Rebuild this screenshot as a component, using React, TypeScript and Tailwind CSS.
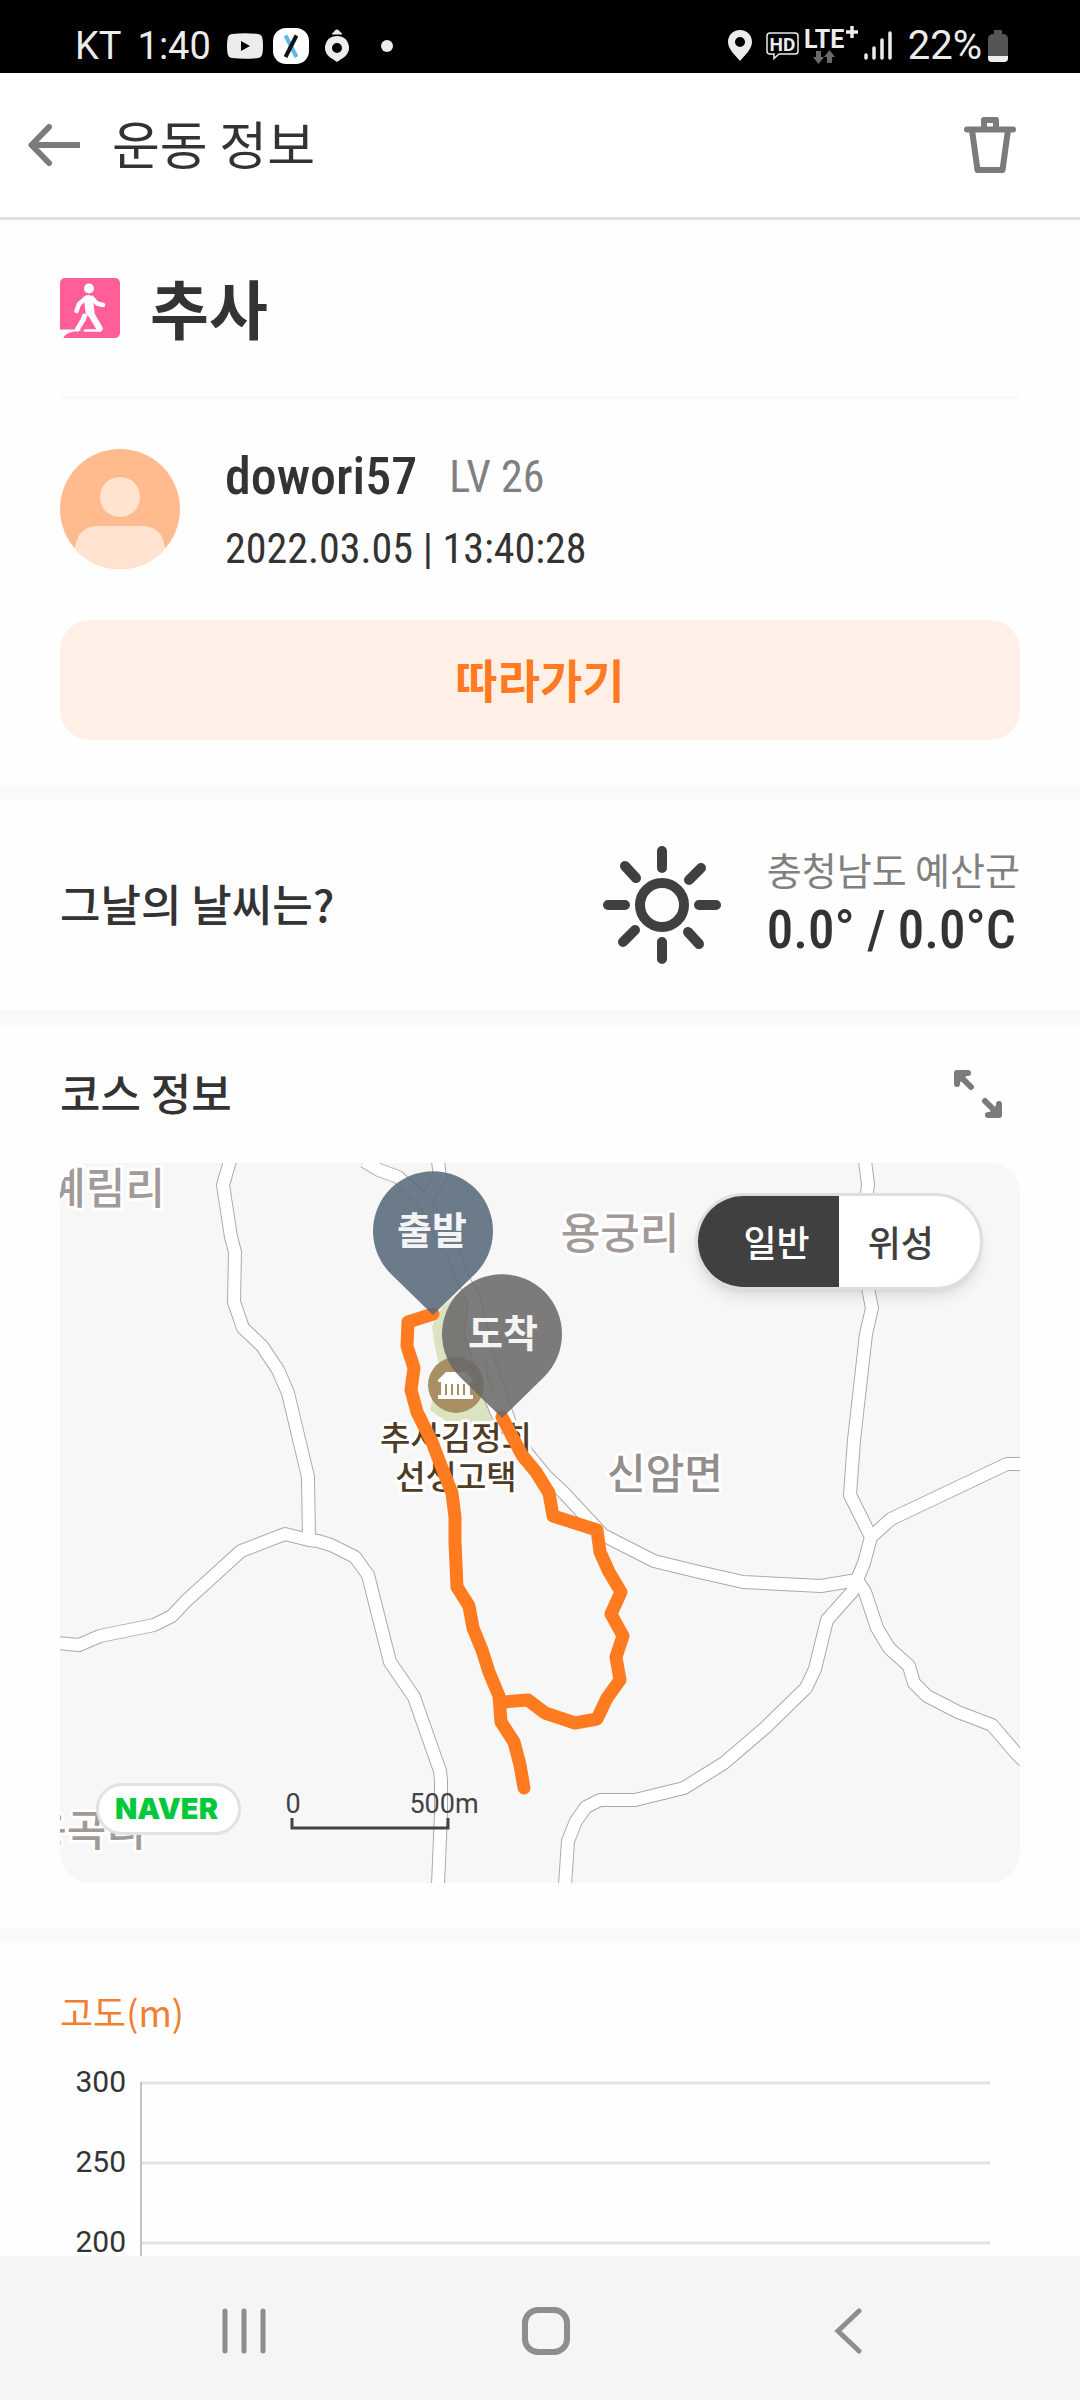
import React, { useState } from 'react';

const ROADS = [
  '170,-2 163,22 171,74 175,89 174,139 183,165 202,183 218,207 228,230 248,314 249,377',
  '-2,480 19,482 40,473 94,462 112,453 126,438 181,388 225,371 249,377 258,378 271,382 295,394 308,412 330,499 354,534 380,608 381,617 381,650 378,722',
  '805,-2 808,21 806,40 808,125 812,145 806,171 794,277 790,332 811,374',
  '962,301 947,301 831,356 811,374 804,400 797,417',
  '797,417 761,423 683,419 639,409 594,398 543,372 503,329 485,312 467,290 450,260 430,204 420,160 413,134 402,114 393,89 380,70 368,44 363,37 338,14 319,7 304,-2',
  '378,-2 380,14 366,38',
  '415,138 411,169 418,190 420,210 437,250 467,298',
  '797,417 792,429 767,457 755,506 746,525 706,564 664,600 624,625 575,637 540,637 526,644 516,658 508,678 505,722',
  '797,417 805,429 817,465 829,485 849,503 854,520 867,533 898,549 932,562 956,590 964,598',
];

const TRACK_OUT =
  '373,151 348,159 347,183 354,205 351,227 357,249 372,279 380,300 392,330 395,354 395,379 397,424 409,443 413,465 422,487 429,509 439,533 441,559 454,579 460,602 464,625';
const TRACK_BACK =
  '443,539 468,537 485,550 515,560 537,556 547,535 560,517 556,494 563,473 551,451 561,429 549,409 540,389 537,367 493,353 489,330 476,309 462,292 442,254';

const ALTITUDES = [300, 250, 200];

const StatusBar: React.FC = () => (
  <div className="flex h-[73px] shrink-0 items-center bg-black pt-[18px] pr-[72px] pl-[75px] font-[Roboto,sans-serif] text-[38px] leading-10 text-[#ececec]">
    <span>KT</span>
    <span className="ml-4">1:40</span>
    <svg className="ml-4" width="36" height="26" viewBox="0 0 36 26" fill="currentColor">
      <path fillRule="evenodd" d="M5 1Q18-.5 31 1Q35 1.500 35.500 6Q36.500 13 35.500 20Q35 24.500 31 25Q18 26.500 5 25Q1 24.500.5 20Q-.5 13 .5 6Q1 1.500 5 1ZM14 8V18L23 13Z" />
    </svg>
    <svg className="ml-[10px]" width="36" height="36" viewBox="0 0 36 36">
      <rect width="36" height="36" rx="13" fill="#fff" />
      <path d="M12.500 7.500 23.500 29" stroke="#5bb8e8" strokeWidth="4" />
      <path d="M23.500 7.500 12.500 29" stroke="#111" strokeWidth="4" />
    </svg>
    <svg className="ml-4" width="24" height="33" viewBox="0 0 24 33" fill="currentColor">
      <path d="M7 4.500Q9 3 10 1.500Q12-.5 14 1.500Q15 3 17 4.500V5.500H7Z" />
      <path fillRule="evenodd" d="M12 7Q17 7 20.500 10Q24 14 24 19C24 26 18 29 12 33C6 29 0 26 0 19Q0 14 3.500 10Q7 7 12 7ZM12 14A5 5 0 1 0 12 24A5 5 0 1 0 12 14Z" />
    </svg>
    <span className="ml-8 h-3 w-3 rounded-full bg-[#ececec]" />

    <div className="ml-auto flex items-center">
      <svg width="24" height="31" viewBox="0 0 24 31" fill="currentColor">
        <path fillRule="evenodd" d="M12 0C19 0 24 5 24 12C24 19 17 25 12 31C7 25 0 19 0 12C0 5 5 0 12 0ZM12 7A5 5 0 1 0 12 17A5 5 0 1 0 12 7Z" />
      </svg>
      <svg className="ml-[14px]" width="34" height="28" viewBox="0 0 34 28">
        <path d="M4 1H29Q32 1 32 4V19Q32 22 29 22H13L8 26.500V22H4Q1 22 1 19V4Q1 1 4 1Z" fill="none" stroke="currentColor" strokeWidth="1.500" />
        <text x="16.500" y="18.500" textAnchor="middle" fontSize="19" fontWeight="700" fill="currentColor">HD</text>
      </svg>
      <svg className="ml-1" width="56" height="40" viewBox="0 0 56 40">
        <text x="0" y="22" fontSize="25" fontWeight="700" fill="currentColor">LTE</text>
        <path d="M42 6H54M48 0V12" stroke="currentColor" strokeWidth="3.500" />
        <path d="M12 25H17V31H20L14.500 38 9 31H12ZM23 37H28V31H31L25.500 24 20 31H23Z" fill="#6a6a6a" />
      </svg>
      <svg className="ml-1" width="28" height="30" viewBox="0 0 28 30" stroke="currentColor" strokeWidth="3.500" strokeLinecap="round">
        <path d="M2 24V27M10 17V27M18 9V27M26 2V27" />
      </svg>
      <span className="ml-4 text-[40px]">22%</span>
      <svg className="ml-[6px]" width="20" height="32" viewBox="0 0 20 32">
        <path d="M6 0H14V4H16Q20 5 20 9V28Q20 32 16 32H4Q0 32 0 28V9Q0 5 4 4H6Z" fill="#555" />
        <path d="M0 26H20V28Q20 32 16 32H4Q0 32 0 28Z" fill="#eee" />
      </svg>
    </div>
  </div>
);

const Header: React.FC = () => (
  <header className="flex h-[147px] shrink-0 items-center border-b-[3px] border-[#e0e0e0] bg-white pr-16 pl-7">
    <button type="button" aria-label="뒤로">
      <svg width="54" height="44" viewBox="0 0 54 44" fill="none" stroke="#7b7b7b" strokeWidth="6" strokeLinecap="round" strokeLinejoin="round">
        <path d="M21 4 3.500 22 21 40" />
        <path d="M5 22H52" strokeLinecap="butt" />
      </svg>
    </button>
    <h1 className="ml-[30px] pb-1 text-[52px] leading-[72px]">운동 정보</h1>
    <button type="button" aria-label="삭제" className="ml-auto">
      <svg width="52" height="57" viewBox="0 0 52 57" fill="none" stroke="#7b7b7b" strokeWidth="6" strokeLinecap="round" strokeLinejoin="round">
        <path d="M3 12.500H49M20 12V3H32V12M8 13 13.500 53H38.500L44 13" />
      </svg>
    </button>
  </header>
);

const Profile: React.FC = () => (
  <section className="px-[60px] pb-[45px]">
    <div className="flex h-[179px] items-center gap-[30px] border-b-[3px] border-[#f9f9f9]">
      <svg width="60" height="60" viewBox="0 0 60 60">
        <rect width="60" height="60" rx="5" fill="#ff5e98" />
        <path d="M0 51.500H14L24 53Q7 52 3 60H0Z" fill="#fff" />
        <circle cx="29" cy="10.500" r="5" fill="#fff" />
        <g fill="none" stroke="#fff" strokeLinecap="round" strokeLinejoin="round">
          <path d="M28.500 21.500 30 34" strokeWidth="9" />
          <path d="M26 20 19 26 16.500 33M32 20 37 25.500 43 27" strokeWidth="4.500" />
          <path d="M30 34 39.500 50.500" strokeWidth="6.500" />
          <path d="M24.500 38 23 42 17.500 51" strokeWidth="5" />
          <path d="M25 52.500H40" strokeWidth="2.500" />
        </g>
      </svg>
      <h2 className="pb-1 text-[64px] leading-[90px] font-bold">추사</h2>
    </div>

    <div className="mt-[34px] mb-[35px] flex items-center gap-[45px]">
      <svg width="120" height="120" viewBox="0 0 120 120">
        <clipPath id="avatar">
          <circle cx="60" cy="60" r="60" />
        </clipPath>
        <g clipPath="url(#avatar)">
          <rect width="120" height="120" fill="#ffba8e" />
          <circle cx="60" cy="48" r="20" fill="#ffe2cf" />
          <path d="M15 120V100Q17 77 39 77H82Q103 77 105 100V120Z" fill="#ffe2cf" />
        </g>
      </svg>
      <div className="pt-2 font-['Roboto_Condensed',Roboto,sans-serif] text-[42px] leading-[72px]">
        <div className="flex gap-8">
          <span className="text-[52px] font-medium">dowori57</span>
          <span className="text-[44px] text-[#808080]">LV 26</span>
        </div>
        <div>2022.03.05 | 13:40:28</div>
      </div>
    </div>

    <button type="button" className="h-[120px] w-full rounded-[30px] bg-[#fff0e7] pb-1 text-[46px] font-bold text-[#ff7a20]">
      따라가기
    </button>
  </section>
);

const Weather: React.FC = () => (
  <section className="flex h-[225px] items-center border-t-[15px] border-[#f9f9f9] px-[60px]">
    <h3 className="pb-1 text-[44px] leading-[60px] font-medium">그날의 날씨는?</h3>
    <svg className="ml-auto" width="118" height="118" viewBox="0 0 118 118" fill="none" stroke="#404040" strokeWidth="10" strokeLinecap="round">
      <circle cx="59" cy="59" r="22" />
      <path d="M59 5V22M59 96V113M5 59H22M96 59H113M22 20 33 32M98 22 86 34M20 96 32 84M96 98 85 86" />
    </svg>
    <div className="ml-[46px]">
      <div className="text-[38px] leading-[50px] text-[#808080]">충청남도 예산군</div>
      <div className="font-['Roboto_Condensed',Roboto,sans-serif] text-[53px] leading-[72px] font-medium">
        0.0° / 0.0°C
      </div>
    </div>
  </section>
);

const CourseMap: React.FC = () => {
  const [satellite, setSatellite] = useState(false);

  return (
    <div className="relative overflow-hidden rounded-[30px] bg-[#f7f7f7]">
      <svg className="block w-full" viewBox="0 0 960 720" fill="none">
        <path d="M390 137Q397 130 405 132L420 160 428 210 446 262H392L370 247 380 207 375 184 372 164Q376 148 390 137Z" fill="#dbe3c0" />

        <g stroke="#aaa" strokeWidth="14" strokeLinejoin="round">
          {ROADS.map((points) => <polyline key={points} points={points} />)}
        </g>
        <g stroke="#fff" strokeWidth="12" strokeLinejoin="round">
          {ROADS.map((points) => <polyline key={points} points={points} />)}
        </g>
        <path d="M424 192 437 236 426 216Z" fill="#dbe3c0" />

        {/* Historic house */}
        <circle cx="396" cy="222" r="28" fill="#a89064" />
        <path d="M386 209H406L413 217V219H378V217ZM381 219H410V232H381ZM378 232H413V236H378Z" fill="#fff" />
        <path d="M386 221V232M392 221V232M398 221V232M404 221V232" stroke="#a89064" strokeWidth="2" />

        <g stroke="#fff" strokeWidth="6" strokeLinejoin="round" className="[paint-order:stroke]" fontSize="43" fontWeight="500">
          <g fill="#a19a99">
            <text x="105" y="41" textAnchor="end">예림리</text>
            <text x="560" y="86" textAnchor="middle">용궁리</text>
            <text x="86" y="683" textAnchor="end">용곡리</text>
          </g>
          <text x="605" y="326" textAnchor="middle" fontSize="42" fill="#938d8c">신암면</text>
          <g fontSize="33" fill="#4f3c26" textAnchor="middle">
            <text x="396" y="287">추사김정희</text>
            <text x="396" y="326">선생고택</text>
          </g>
        </g>

        <g stroke="#ff7b20" strokeWidth="13" strokeLinejoin="round" strokeLinecap="round">
          <polyline points={TRACK_OUT} />
          <polyline points={TRACK_BACK} />
        </g>

        {/* Start and finish pins */}
        <path d="M373 152 331 111A60 60 0 1 1 415 111Z" fill="#586a7b" fillOpacity="0.88" />
        <path d="M442 255 400 214A60 60 0 1 1 484 214Z" fill="#686868" fillOpacity="0.87" />
        <g fill="#f4f4f4" fontSize="38" fontWeight="700" textAnchor="middle">
          <text x="372" y="81">출발</text>
          <text x="443" y="184">도착</text>
        </g>

        <path d="M232 655V665H388V655" stroke="#404448" strokeWidth="3" />
        <g fill="#404448" fontSize="27" textAnchor="middle" className="font-[Roboto,sans-serif]">
          <text x="233" y="650">0</text>
          <text x="384" y="650">500m</text>
        </g>
      </svg>

      <div className="absolute top-[30px] right-[37px] flex rounded-full border-[3px] border-[#dedede] bg-white text-[36px] leading-[91px] font-medium shadow-lg">
        <button
          type="button"
          aria-pressed={!satellite}
          onClick={() => setSatellite(false)}
          className="rounded-l-full bg-[#404040] pr-[29px] pl-[46px] text-white"
        >
          일반
        </button>
        <button
          type="button"
          aria-pressed={satellite}
          onClick={() => setSatellite(true)}
          className="rounded-r-full pr-[46px] pl-[29px] text-[#404040]"
        >
          위성
        </button>
      </div>

      <a href="#naver" className="absolute bottom-12 left-9 flex h-[52px] items-center rounded-full border-[3px] border-[#e2e2e2] bg-white pr-5 pl-4 font-[Inter,sans-serif] text-[29px] font-black text-[#03c83c]">
        NAVER
      </a>
    </div>
  );
};

const Course: React.FC = () => (
  <section className="border-t-[15px] border-[#f9f9f9] px-[60px] pb-[45px]">
    <div className="flex h-[138px] items-center justify-between pr-[17px]">
      <h3 className="pb-1 text-[44px] leading-[60px] font-medium">코스 정보</h3>
      <button type="button" aria-label="지도 확대">
        <svg width="50" height="50" viewBox="0 0 50 50" fill="none" stroke="#7b7b7b" strokeWidth="6" strokeLinecap="round" strokeLinejoin="round">
          <path d="M4 15V4H15M5 5 18 18M46 35V46H35M45 45 32 32" />
          <path d="M3 3H16L3 16ZM47 47H34L47 34Z" fill="#7b7b7b" strokeWidth="2" />
        </svg>
      </button>
    </div>
    <CourseMap />
  </section>
);

const Altitude: React.FC = () => (
  <section className="border-t-[15px] border-[#f9f9f9] px-[60px] pt-[38px]">
    <h3 className="mb-[18px] text-[36px] leading-[60px] text-[#f08030]">고도(m)</h3>
    <svg className="block w-full" viewBox="0 0 960 200">
      {ALTITUDES.map((value, i) => (
        <g key={value}>
          <path d={`M81 ${24 + i * 80}H930`} stroke="#e3e3e3" strokeWidth="3" />
          <text x="66" y={33 + i * 80} textAnchor="end" fontSize="30" fill="#333" className="font-[Roboto,sans-serif]">
            {value}
          </text>
        </g>
      ))}
      <path d="M81 23V200" stroke="#c4c4c4" strokeWidth="2" />
    </svg>
  </section>
);

const NavBar: React.FC = () => (
  <nav className="grid h-36 shrink-0 grid-cols-3 place-items-center bg-[#f5f5f5] pt-1.5 pr-[81px] pl-[93px]">
    <button type="button" aria-label="최근 앱">
      <svg width="44" height="48" viewBox="0 0 44 48" stroke="#8e8e8e" strokeWidth="5" strokeLinecap="round">
        <path d="M3 4V44M22 4V44M41 4V44" />
      </svg>
    </button>
    <button type="button" aria-label="홈">
      <svg width="50" height="50" viewBox="0 0 50 50" fill="none" stroke="#8e8e8e" strokeWidth="6">
        <rect x="4" y="4" width="42" height="42" rx="13" />
      </svg>
    </button>
    <button type="button" aria-label="이전">
      <svg width="28" height="48" viewBox="0 0 28 48" fill="none" stroke="#8e8e8e" strokeWidth="5" strokeLinecap="round">
        <path d="M25 4 4 24 25 44" />
      </svg>
    </button>
  </nav>
);

const App: React.FC = () => {
  return (
    <div className="flex h-screen flex-col bg-[#fefefe] font-['Noto_Sans_CJK_KR',sans-serif] text-[#333]">
      <StatusBar />
      <Header />
      <main className="min-h-0 flex-1 overflow-hidden">
        <Profile />
        <Weather />
        <Course />
        <Altitude />
      </main>
      <NavBar />
    </div>
  );
};

export default App;
